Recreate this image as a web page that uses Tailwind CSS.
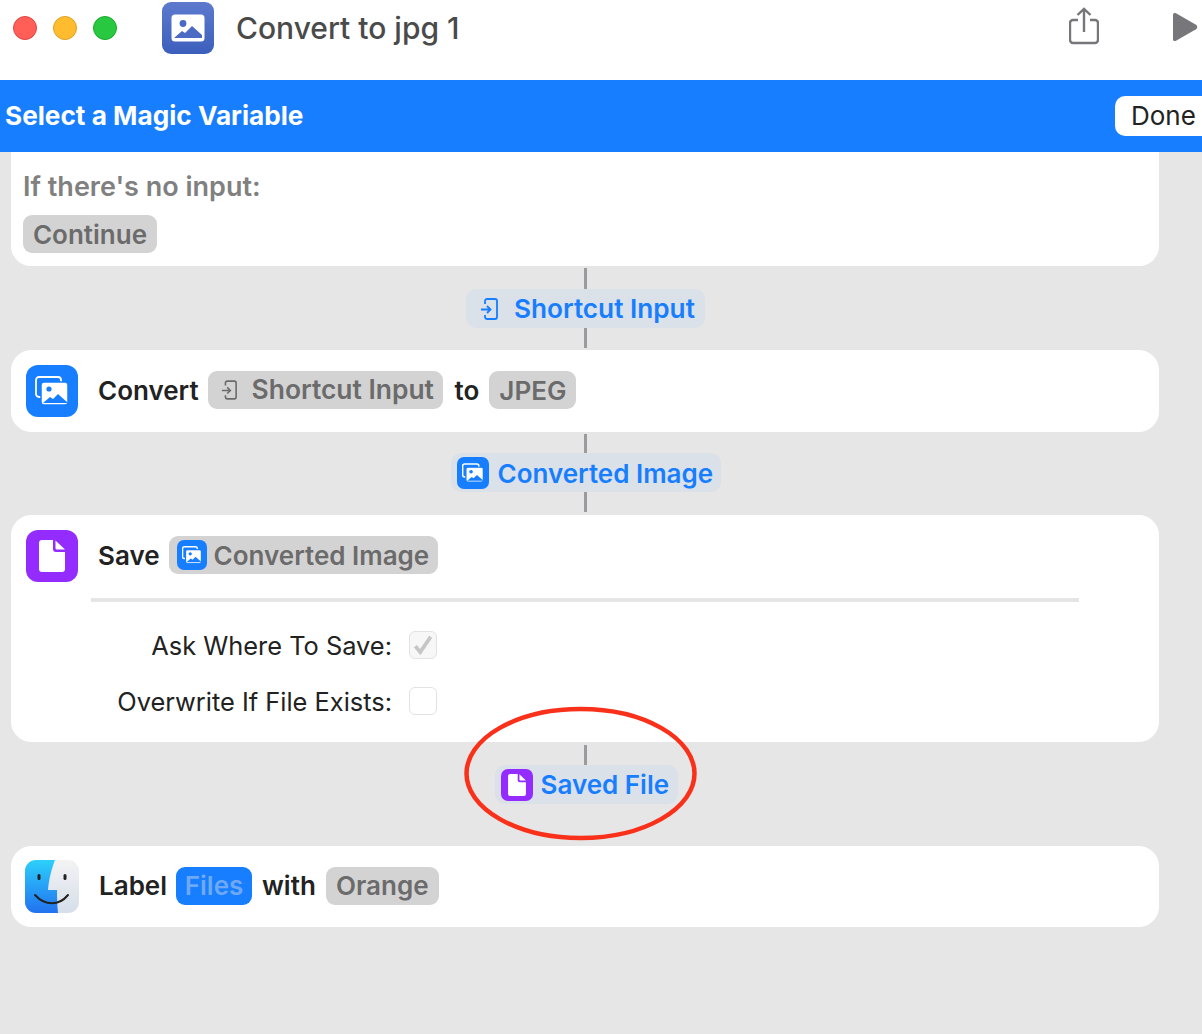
<!DOCTYPE html>
<html>
<head>
<meta charset="utf-8">
<script src="https://cdn.jsdelivr.net/npm/@tailwindcss/browser@4"></script>
</head>
<body class="m-0 bg-[#e5e6e5] font-['Inter','Liberation_Sans',sans-serif]">
<div class="relative w-[1202px] h-[1034px] overflow-hidden bg-[#e5e6e5]">

  <!-- title bar -->
  <div class="bg-white h-[80px]">
    <div class="h-[56px] flex items-center pl-[13px]">
      <div class="w-6 h-6 rounded-full bg-[#ff5f57] border border-[#e0443e]"></div>
      <div class="w-6 h-6 rounded-full bg-[#febc2e] border border-[#dea123] ml-4"></div>
      <div class="w-6 h-6 rounded-full bg-[#28c840] border border-[#1aab29] ml-4"></div>
      <div class="w-[52px] h-[52px] rounded-[9px] bg-gradient-to-b from-[#5d7acd] to-[#3c5fbc] ml-[45px] flex items-center justify-center">
        <svg width="34" height="28" viewBox="0 0 34 28"><rect width="33" height="27" x=".5" y=".5" rx="3.5" fill="#fff"/><circle cx="12" cy="9.5" r="3.4" fill="#4a6ac3"/><path d="M3 24l8-7 3 2 7-7 10 9v3H3z" fill="#4a6ac3"/></svg>
      </div>
      <div class="ml-[22px] text-[30px] leading-none font-medium text-[#4a4a4a] -mt-[1px]">Convert to jpg 1</div>
      <svg class="ml-auto -mt-[4px]" width="30" height="38" viewBox="0 0 30 38" fill="none" stroke="#77777b" stroke-width="2.4"><path d="M9 13H4a3 3 0 0 0-3 3v17a3 3 0 0 0 3 3h22a3 3 0 0 0 3-3V16a3 3 0 0 0-3-3h-5"/><path d="M15 25V2M8.500 8L15 1.800 21.500 8"/></svg>
      <svg class="ml-[73px] mr-[4px] -mt-[2px] shrink-0" width="26" height="30" viewBox="0 0 26 30"><path d="M1 3c0-2 1.400-2.600 3-1.700l20 11.500c1.700 1 1.700 3.400 0 4.400L4 28.700C2.400 29.600 1 29 1 27z" fill="#77777b"/></svg>
    </div>
  </div>

  <!-- blue bar -->
  <div class="bg-[#167eff] h-[72px] flex items-center justify-between pl-[5px]">
    <div class="text-[26.2px] font-bold text-white leading-none">Select a Magic Variable</div>
    <div class="w-[97px] h-[40px] -mr-[10px] bg-white rounded-[10px] pl-[16px] flex items-center text-[26px] text-[#222] leading-none">Done</div>
  </div>

  <!-- flow -->
  <div class="ml-[11px] w-[1148px]">
    <!-- card 1 -->
    <div class="bg-white h-[114px] rounded-b-[20px] pl-[11px] pt-[20px] border-b border-x border-white">
      <div class="text-[27px] leading-[30px] font-semibold text-[#808080]">If there's no input:</div>
      <div class="mt-[13px] flex w-[134px] items-center justify-center h-[38px] rounded-[9px] bg-[#d3d3d3] text-[26px] font-semibold text-[#6b6b6b]">Continue</div>
    </div>

    <!-- connector -->
    <div class="h-[84px] flex flex-col items-center pt-[2px]">
      <div class="w-[3px] h-[21px] bg-[#9a9a9f]"></div>
      <div class="h-[39px] w-[239px] rounded-[10px] bg-[#dbe1e9] flex items-center pl-[14px] text-[26.2px] font-semibold text-[#167eff] ml-px">
        <svg width="18" height="22" viewBox="0 0 18 22" fill="none" stroke="#167eff" stroke-width="1.800"><path d="M5 6V3a2 2 0 0 1 2-2h8a2 2 0 0 1 2 2v16a2 2 0 0 1-2 2H7a2 2 0 0 1-2-2v-2"/><path d="M1 11.500h9M7 8l3.500 3.500L7 15"/></svg>
        <span class="ml-[16px] whitespace-nowrap">Shortcut Input</span>
      </div>
      <div class="w-[3px] h-[20px] bg-[#9a9a9f]"></div>
    </div>

    <!-- card 2 -->
    <div class="bg-white h-[82px] rounded-[20px] border border-white flex items-center pl-[14px] text-[26px] font-semibold text-[#222]">
      <div class="w-[52px] h-[52px] rounded-[12px] bg-[#167eff] flex items-center justify-center shrink-0">
        <svg width="34" height="30" viewBox="0 0 34 30" fill="none"><rect x="1" y="1" width="25" height="20" rx="3" stroke="#fff" stroke-width="1.800"/><rect x="6" y="6" width="27" height="23" rx="3" fill="#fff" stroke="#167eff" stroke-width="1.500"/><circle cx="14" cy="13" r="2.600" fill="#167eff"/><path d="M8 27l7-6 3 2 5-5 9 8v1H8z" fill="#167eff"/></svg>
      </div>
      <div class="flex items-center mb-[2px]">
        <span class="ml-[20px]">Convert</span>
        <div class="ml-[9px] h-[38px] w-[235px] rounded-[9px] bg-[#d3d3d3] flex items-center pl-[13px] text-[26.4px] text-[#6b6b6b]">
          <svg width="16" height="20" viewBox="0 0 18 22" fill="none" stroke="#6b6b6b" stroke-width="1.800"><path d="M5 6V3a2 2 0 0 1 2-2h8a2 2 0 0 1 2 2v16a2 2 0 0 1-2 2H7a2 2 0 0 1-2-2v-2"/><path d="M1 11.500h9M7 8l3.500 3.500L7 15"/></svg>
          <span class="ml-[15px] whitespace-nowrap">Shortcut Input</span>
        </div>
        <span class="ml-[12px]">to</span>
        <div class="ml-[10px] h-[38px] w-[87px] justify-center rounded-[9px] bg-[#d3d3d3] flex items-center text-[#6b6b6b]">JPEG</div>
      </div>
    </div>

    <!-- connector -->
    <div class="h-[83px] flex flex-col items-center pt-[2px]">
      <div class="w-[3px] h-[19px] bg-[#9a9a9f]"></div>
      <div class="h-[39px] w-[270px] rounded-[10px] bg-[#dbe1e9] flex items-center pl-[6px] text-[26px] font-semibold text-[#167eff] ml-px">
        <div class="w-[32px] h-[32px] rounded-[7px] bg-[#167eff] flex items-center justify-center shrink-0">
          <svg width="22" height="20" viewBox="0 0 34 30" fill="none"><rect x="1" y="1" width="25" height="20" rx="3" stroke="#fff" stroke-width="2.400"/><rect x="6" y="6" width="27" height="23" rx="3" fill="#fff" stroke="#167eff" stroke-width="2"/><circle cx="14" cy="13" r="2.800" fill="#167eff"/><path d="M8 27l7-6 3 2 5-5 9 8v1H8z" fill="#167eff"/></svg>
        </div>
        <span class="ml-[9px] mt-[2px] whitespace-nowrap">Converted Image</span>
      </div>
      <div class="w-[3px] h-[20px] bg-[#9a9a9f]"></div>
    </div>

    <!-- card 3 -->
    <div class="bg-white h-[227px] rounded-[20px] border border-white pl-[14px] pt-[14px]">
      <div class="flex items-center h-[52px] text-[26px] font-semibold text-[#222]">
        <div class="w-[52px] h-[52px] rounded-[12px] bg-[#942cff] flex items-center justify-center shrink-0">
          <svg width="26" height="32" viewBox="0 0 26 32"><path d="M3 0h11v9a3 3 0 0 0 3 3h9v17a3 3 0 0 1-3 3H3a3 3 0 0 1-3-3V3a3 3 0 0 1 3-3z" fill="#fff"/><path d="M16.500 0.500L26 9.500h-8a1.500 1.500 0 0 1-1.500-1.500z" fill="#fff"/></svg>
        </div>
        <div class="flex items-center mb-[2px]">
          <span class="ml-[20px]">Save</span>
          <div class="ml-[9px] h-[38px] w-[269px] rounded-[9px] bg-[#d3d3d3] flex items-center pl-[8px] text-[#6b6b6b]">
            <div class="w-[30px] h-[30px] rounded-[7px] bg-[#167eff] flex items-center justify-center shrink-0">
              <svg width="20" height="18" viewBox="0 0 34 30" fill="none"><rect x="1" y="1" width="25" height="20" rx="3" stroke="#fff" stroke-width="2.400"/><rect x="6" y="6" width="27" height="23" rx="3" fill="#fff" stroke="#167eff" stroke-width="2"/><circle cx="14" cy="13" r="2.800" fill="#167eff"/><path d="M8 27l7-6 3 2 5-5 9 8v1H8z" fill="#167eff"/></svg>
            </div>
            <span class="ml-[7px] whitespace-nowrap">Converted Image</span>
          </div>
        </div>
      </div>
      <div class="ml-[65px] mt-[16px] w-[988px] h-[4px] bg-[#e5e5e5]"></div>
      <div class="mt-[29px] flex items-center h-[28px] justify-end w-[411px] text-[25.4px] text-[#222]">
        <span class="whitespace-nowrap mt-[2px]">Ask Where To Save:</span>
        <div class="ml-[17px] w-[28px] h-[28px] rounded-[6px] border border-[#e2e2e2] bg-[#f7f7f7] flex items-center justify-center shrink-0">
          <svg width="22" height="22" viewBox="0 0 20 20" fill="none" stroke="#c6c6c6" stroke-width="3.400"><path d="M3 11l4.500 5.500L17 2.500"/></svg>
        </div>
      </div>
      <div class="mt-[28px] flex items-center h-[28px] justify-end w-[411px] text-[25.4px] text-[#222]">
        <span class="whitespace-nowrap mt-[2px]">Overwrite If File Exists:</span>
        <div class="ml-[17px] w-[28px] h-[28px] rounded-[6px] border border-[#e2e2e2] bg-white shrink-0"></div>
      </div>
    </div>

    <!-- connector -->
    <div class="h-[104px] flex flex-col items-center pt-[3px]">
      <div class="w-[3px] h-[20px] bg-[#9a9a9f]"></div>
      <div class="h-[39px] w-[183px] rounded-[10px] bg-[#dbe1e9] flex items-center pl-[6px] text-[26px] font-semibold text-[#167eff] ml-[2px]">
        <div class="w-[32px] h-[32px] rounded-[7px] bg-[#942cff] flex items-center justify-center shrink-0">
          <svg width="18" height="22" viewBox="0 0 26 32"><path d="M3 0h11v9a3 3 0 0 0 3 3h9v17a3 3 0 0 1-3 3H3a3 3 0 0 1-3-3V3a3 3 0 0 1 3-3z" fill="#fff"/><path d="M16.500 0.500L26 9.500h-8a1.500 1.500 0 0 1-1.500-1.500z" fill="#fff"/></svg>
        </div>
        <span class="ml-[8px] whitespace-nowrap">Saved File</span>
      </div>
    </div>

    <!-- card 4 -->
    <div class="bg-white h-[81px] rounded-[20px] border border-white flex items-center pl-[13px] text-[26px] font-semibold text-[#222]">
      <svg class="shrink-0" width="54" height="54" viewBox="0 0 54 54">
        <defs>
          <linearGradient id="fl" x1="0" y1="0" x2="0" y2="1"><stop offset="0" stop-color="#2cd0fb"/><stop offset="1" stop-color="#2272f0"/></linearGradient>
          <linearGradient id="fr" x1="0" y1="0" x2="0" y2="1"><stop offset="0" stop-color="#f3f3f4"/><stop offset="1" stop-color="#d5deea"/></linearGradient>
        </defs>
        <rect x="0" y="0" width="54" height="53" rx="11" fill="url(#fr)"/>
        <path d="M11 0h19c-3 8-6 18-7 30h9c0 7 0 14 1 23H11A11 11 0 0 1 0 42V11A11 11 0 0 1 11 0z" fill="url(#fl)"/>
        <rect x="12.500" y="14" width="3" height="6" rx="1.500" fill="#222"/>
        <rect x="38.500" y="14" width="3" height="6" rx="1.500" fill="#222"/>
        <path d="M10 35c10 11 24 11 33 0" fill="none" stroke="#222" stroke-width="2" stroke-linecap="round"/>
      </svg>
      <div class="flex items-center mb-[2px]">
        <span class="ml-[20px]">Label</span>
        <div class="ml-[9px] h-[38px] w-[76px] rounded-[9px] bg-[#167eff] flex items-center justify-center text-[#6fa9f5]">Files</div>
        <span class="ml-[10px]">with</span>
        <div class="ml-[10px] h-[38px] w-[113px] rounded-[9px] bg-[#d3d3d3] flex items-center justify-center text-[#6b6b6b]">Orange</div>
      </div>
    </div>
  </div>

  <!-- red annotation -->
  <svg class="absolute left-[460px] top-[702px]" width="242" height="144" viewBox="0 0 242 144" fill="none">
    <ellipse cx="120.500" cy="71.500" rx="114" ry="64.500" stroke="#f9301a" stroke-width="4.500"/>
  </svg>
</div>
</body>
</html>
